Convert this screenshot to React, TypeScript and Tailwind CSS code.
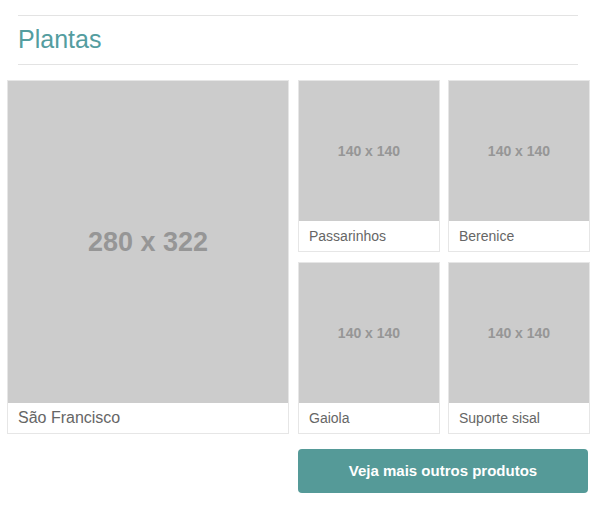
const small = [
  { name: 'Passarinhos' },
  { name: 'Berenice' },
  { name: 'Gaiola' },
  { name: 'Suporte sisal' },
];

const Placeholder = ({ label, className }: { label: string; className: string }) => (
  <div className={`bg-[#cccccc] flex items-center justify-center text-[#969696] font-bold ${className}`}>
    {label}
  </div>
);

const App = () => {
  return (
    <div className="w-[600px] h-[505px] bg-white font-['Liberation_Sans',Arial,sans-serif]">
      {/* Heading */}
      <div className="pt-[15px] mx-[18px] w-[560px]">
        <div className="border-t border-b border-[#e3e3e3] h-[50px] flex items-center">
          <h2 className="text-[25px] text-[#549d9f] leading-none mt-[-2px]">Plantas</h2>
        </div>
      </div>

      {/* Products */}
      <div className="flex pl-[7px] mt-[15px]">
        <div className="w-[282px] border border-[#e6e6e6]">
          <Placeholder label="280 x 322" className="w-[280px] h-[322px] text-[27px]" />
          <div className="h-[30px] px-[10px] flex items-center text-[16px] text-[#666666]">São Francisco</div>
        </div>

        <div className="ml-[9px] grid grid-cols-[142px_142px] gap-x-[8px] gap-y-[10px]">
          {small.map((p) => (
            <div key={p.name} className="w-[142px] border border-[#e6e6e6]">
              <Placeholder label="140 x 140" className="w-[140px] h-[140px] text-[14px]" />
              <div className="h-[30px] px-[10px] flex items-center text-[14px] text-[#666666]">{p.name}</div>
            </div>
          ))}
        </div>
      </div>

      <div className="mt-[15px] ml-[298px]">
        <button className="w-[290px] h-[44px] rounded-[4px] bg-[#559a98] text-white font-bold text-[15px]">
          Veja mais outros produtos
        </button>
      </div>
    </div>
  );
};

export default App;
